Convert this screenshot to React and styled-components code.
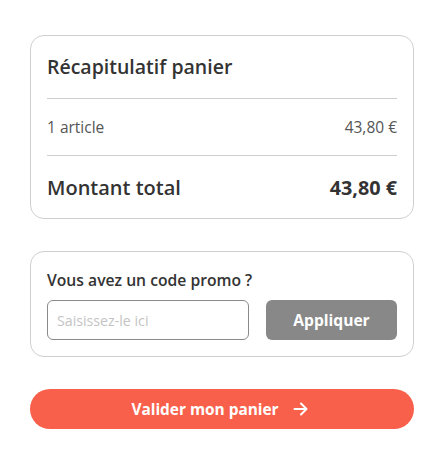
import React from 'react';
import styled, { createGlobalStyle } from 'styled-components';

const GlobalStyle = createGlobalStyle`
    body {
        margin: 0;
        background: #fff;
        font-family: "Open Sans", "Liberation Sans", sans-serif;
        color: #333;
    }
`;

const Page = styled.div`
    display: flex;
    flex-direction: column;
    padding: 35px 29px 0 30px;
`;

const Card = styled.div`
    border: 1px solid #cfcfcf;
    border-radius: 14px;
    padding: 0 16px;
    margin-bottom: ${props => props.gap || 0}px;
`;

const Title = styled.h2`
    margin: 0;
    padding: 18px 0 18px;
    font-size: 19.5px;
    line-height: 26px;
    font-weight: 600;
    color: #333;
    border-bottom: 1px solid #cfcfcf;
`;

const Row = styled.div`
    display: flex;
    justify-content: space-between;
    align-items: center;
    height: ${props => props.height}px;
    font-size: ${props => (props.total ? '20px' : '15.5px')};
    font-weight: ${props => (props.total ? 600 : 400)};
    color: ${props => (props.total ? '#333' : '#555')};
    border-bottom: ${props => (props.divider ? '1px solid #cfcfcf' : 'none')};
`;

const Amount = styled.span`
    font-size: ${props => (props.total ? '19.8px' : '15.5px')};
    font-weight: ${props => (props.total ? 700 : 400)};
`;

const PromoLabel = styled.p`
    margin: 0;
    padding-top: 18px;
    font-size: 15.7px;
    line-height: 20px;
    font-weight: 600;
    color: #333;
`;

const PromoForm = styled.div`
    display: flex;
    gap: 17px;
    margin: 10px 0 16px;
`;

const Input = styled.input`
    box-sizing: border-box;
    width: 202px;
    height: 40px;
    border: 1px solid #8a8a8a;
    border-radius: 6px;
    padding: 0 9px;
    font-family: "Open Sans", "Liberation Sans", sans-serif;
    font-size: 14.2px;
    color: #333;
    outline: none;

    &::placeholder {
        color: #c4c4c4;
    }
`;

const ApplyButton = styled.button`
    flex: 1;
    height: 40px;
    border: none;
    border-radius: 6px;
    background: #888;
    color: #fff;
    font-family: "Open Sans", "Liberation Sans", sans-serif;
    font-size: 15.6px;
    font-weight: 700;
`;

const SubmitButton = styled.button`
    display: flex;
    align-items: center;
    justify-content: center;
    gap: 14px;
    height: 40px;
    padding: 0 5px 0 0;
    border: none;
    border-radius: 20px;
    background: #f9604c;
    color: #fff;
    font-family: "Open Sans", "Liberation Sans", sans-serif;
    font-size: 15.4px;
    font-weight: 700;
`;

function Arrow() {
    return (
        <svg width="15" height="14" viewBox="0 0 15 14" fill="none" stroke="#fff" strokeWidth="2" strokeLinecap="round" strokeLinejoin="round">
            <path d="M1.5 7h12M8 1.5l5.5 5.5L8 12.5" />
        </svg>
    );
}

export default function App() {
    return (
        <>
            <GlobalStyle />
            <Page>
                <Card gap={32}>
                    <Title>Récapitulatif panier</Title>
                    <Row height={56} divider>
                        <span>1 article</span>
                        <Amount>43,80 €</Amount>
                    </Row>
                    <Row height={62} total>
                        <span>Montant total</span>
                        <Amount total>43,80 €</Amount>
                    </Row>
                </Card>
                <Card gap={32}>
                    <PromoLabel>Vous avez un code promo ?</PromoLabel>
                    <PromoForm>
                        <Input placeholder="Saisissez-le ici" />
                        <ApplyButton>Appliquer</ApplyButton>
                    </PromoForm>
                </Card>
                <SubmitButton>
                    Valider mon panier
                    <Arrow />
                </SubmitButton>
            </Page>
        </>
    );
}
